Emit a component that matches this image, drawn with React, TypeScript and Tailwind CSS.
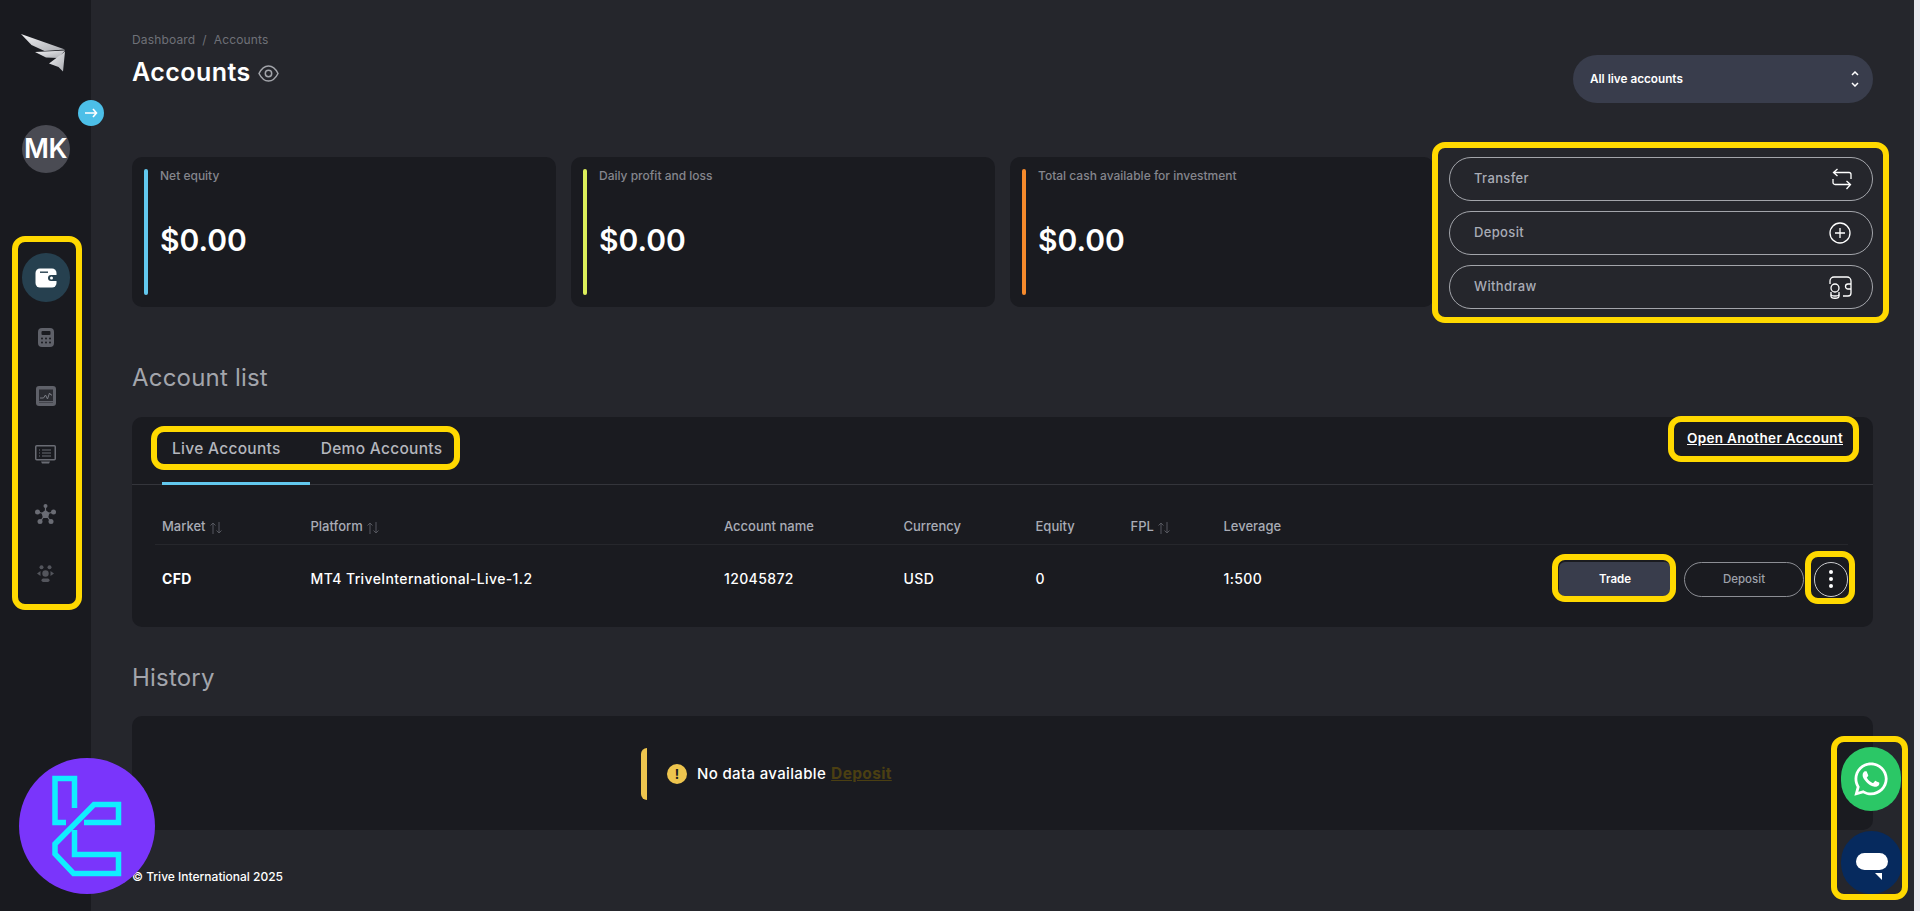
import React from "react";
import { FaWhatsapp } from "react-icons/fa";

const Highlight = ({ cls }: { cls: string }) => (
  <div className={`absolute border-[6px] border-[#ffd900] rounded-[13px] pointer-events-none ${cls}`} />
);

const Card = ({ label, bar }: { label: string; bar: string }) => (
  <div className="h-[150px] rounded-[10px] bg-[#1a1b20] flex pt-[12px] pl-[12px]">
    <div className={`w-[4px] h-[126px] rounded-full ${bar}`} />
    <div className="pl-[12px]">
      <div className="text-[12px] leading-[14px] text-[#85868d] font-medium">{label}</div>
      <div className="mt-[39px] text-[30px] leading-[36px] font-semibold text-white">$0.00</div>
    </div>
  </div>
);

const ActionBtn = ({ label, icon }: { label: string; icon: React.ReactNode }) => (
  <div className="h-[44px] rounded-full border border-[#a3a5ab] flex items-center justify-between pl-[24px] pr-[20px]">
    <span className="text-[13px] font-medium tracking-[0.35px] text-[#a9acb6] -mt-[1px]">{label}</span>
    {icon}
  </div>
);

const Sort = () => (
  <svg width="14" height="14" viewBox="0 0 14 14" fill="none" stroke="#55575e" strokeWidth="1" className="ml-[3px] mt-[2px]">
    <path d="M4 13V2M1.500 4.500L4 2l2.500 2.500M10 1v11M7.500 9.500L10 12l2.500-2.500" />
  </svg>
);

const Th = ({ children, sort }: { children: React.ReactNode; sort?: boolean }) => (
  <div className="flex items-center text-[13px] font-medium text-[#a9acb6]">
    {children}
    {sort && <Sort />}
  </div>
);

const Td = ({ children, bold }: { children: React.ReactNode; bold?: boolean }) => (
  <div className={`text-[14px] -mt-[2px] text-white ${bold ? "font-bold" : "font-medium"} tracking-[0.38px]`}>{children}</div>
);

const NavIcons = () => (
  <div className="flex flex-col items-center">
    <div className="w-[48px] h-[49px] rounded-full bg-[#26404f] flex items-center justify-center">
      <svg width="22" height="20" viewBox="0 0 22 20">
        <rect x="0.500" y="0.500" width="21" height="19" rx="4.500" fill="#fff" />
        <rect x="5" y="3.500" width="8" height="1.400" fill="#26404f" />
        <path d="M22 7h-6a3 3 0 0 0 0 6h6z" fill="#26404f" />
        <circle cx="16.500" cy="10" r="1.500" fill="#fff" />
      </svg>
    </div>
    <svg className="mt-[26px]" width="16" height="19" viewBox="0 0 16 19">
      <rect width="16" height="19" rx="4" fill="#5f6169" />
      <rect x="3.500" y="3" width="9" height="4" rx="1" fill="#1a1b20" />
      <g fill="#1a1b20">
        <circle cx="4" cy="10.500" r="1" /><circle cx="8" cy="10.500" r="1" /><circle cx="12" cy="10.500" r="1" />
        <circle cx="4" cy="14.500" r="1" /><circle cx="8" cy="14.500" r="1" /><circle cx="12" cy="14.500" r="1" />
      </g>
    </svg>
    <svg className="mt-[39px]" width="20" height="20" viewBox="0 0 20 20">
      <rect width="20" height="20" rx="3" fill="#5f6169" />
      <rect x="3" y="3.500" width="14" height="13" fill="#2a2b31" />
      <path d="M4 12h3.500l2-3 2 4 2-6 1.500 2h1" fill="none" stroke="#7b7d85" strokeWidth="1" />
      <path d="M3 15.500h14" stroke="#5f6169" strokeWidth="1" />
    </svg>
    <svg className="mt-[39px]" width="21" height="19" viewBox="0 0 21 19" fill="none" stroke="#6a6c74">
      <rect x="0.750" y="0.750" width="19.500" height="14" rx="1" strokeWidth="1.500" />
      <path d="M7 5h9M7 8h9M7 11h9M4 5h1M4 8h1M4 11h1" strokeWidth="1.200" />
      <path d="M6 16.500h9l-1 2H7z" fill="#6a6c74" stroke="none" />
    </svg>
    <svg className="mt-[40px]" width="21" height="20" viewBox="0 0 21 20" fill="#6a6c74" stroke="#6a6c74">
      <path d="M10.500 2v8M2.500 8l8 2 8-2M5 18l5.500-8 5.500 8" strokeWidth="1.200" fill="none" />
      <circle cx="10.500" cy="2" r="2" stroke="none" />
      <circle cx="2.500" cy="8" r="2.500" stroke="none" />
      <circle cx="18.500" cy="8" r="2.500" stroke="none" />
      <circle cx="5" cy="17.500" r="2.500" stroke="none" />
      <circle cx="16" cy="17.500" r="2.500" stroke="none" />
      <path d="M10.500 6l4 3-1.500 5h-5L6.500 9z" stroke="none" />
    </svg>
    <svg className="mt-[41px]" width="17" height="17" viewBox="0 0 17 17" fill="#53555c">
      <circle cx="4.500" cy="2.200" r="2" />
      <circle cx="12.500" cy="2.200" r="2" />
      <circle cx="8.500" cy="8.500" r="3.200" />
      <path d="M0 8.500L3.500 6v5zM17 8.500L13.500 6v5z" />
      <rect x="4.500" y="13.500" width="8" height="3.500" rx="1.700" />
    </svg>
  </div>
);

export default function App() {
  return (
    <div className="relative flex h-[911px] w-full overflow-hidden bg-[#25262c] font-['Inter',sans-serif]">
      <aside className="w-[91px] shrink-0 bg-[#191a1f] flex flex-col items-center">
        <svg className="mt-[33px] ml-[-3px]" width="46" height="40" viewBox="20 33 46 40">
          <defs>
            <linearGradient id="wing" x1="0" y1="0" x2="1" y2="1">
              <stop offset="0" stopColor="#f2f2f4" />
              <stop offset="1" stopColor="#a9abb0" />
            </linearGradient>
          </defs>
          <g fill="url(#wing)">
            <path d="M20 34l44 15.500-20.500 1.500-13-6z" />
            <path d="M34 52l30-1.500-7 7.500-12-.5z" />
            <path d="M48 63.500l16-12-2 20-4.500-4.500z" />
          </g>
        </svg>
        <div className="mt-[52px] w-[48px] h-[48px] rounded-full bg-[#4a4b53] flex items-center justify-center text-[27px] tracking-[-0.5px] font-semibold text-white">
          MK
        </div>
        <div className="mt-[80px]">
          <NavIcons />
        </div>
      </aside>

      <main className="flex-1 min-w-0 px-[41px] pt-[33px]">
        <div className="h-[124px] flex justify-between items-start">
          <div>
            <div className="text-[12px] leading-[14px] text-[#6f7178] tracking-[0.15px]">Dashboard&nbsp; / &nbsp;Accounts</div>
            <div className="mt-[10px] flex items-center">
              <span className="text-[25px] leading-[30px] font-semibold text-white tracking-[0.45px]">Accounts</span>
              <svg className="ml-[7px] mt-[3px]" width="21" height="17" viewBox="0 0 21 17" fill="none" stroke="#a3a5ab" strokeWidth="1.500">
                <path d="M1 8.500C3.500 3.500 7 1 10.500 1S17.500 3.500 20 8.500C17.500 13.500 14 16 10.500 16S3.500 13.500 1 8.500z" />
                <circle cx="10.500" cy="8.500" r="3.200" />
              </svg>
            </div>
          </div>
          <div className="mt-[22px] w-[300px] h-[48px] rounded-full bg-[#393d4c] flex items-center justify-between pl-[17px] pr-[14px]">
            <span className="text-[11.750px] font-semibold text-white mt-[1px]">All live accounts</span>
            <svg width="8" height="16" viewBox="0 0 8 16" fill="none" stroke="#fff" strokeWidth="1.500">
              <path d="M1 4l3-3 3 3M1 12l3 3 3-3" />
            </svg>
          </div>
        </div>

        <div className="grid grid-cols-4 gap-[15px]">
          <Card label="Net equity" bar="bg-[#62c8ee]" />
          <Card label="Daily profit and loss" bar="bg-[#dcef5a]" />
          <Card label="Total cash available for investment" bar="bg-[#f58a2c]" />
          <div className="flex flex-col gap-[10px]">
            <ActionBtn
              label="Transfer"
              icon={
                <svg width="20" height="22" viewBox="0 0 20 22" fill="none" stroke="#fff" strokeWidth="1.300">
                  <path d="M5.500 1L1.500 4.500 5.500 8M1.500 4.500H17a2 2 0 0 1 2 2V11M14.500 21l4-4.500-4-3.500M18.500 16.500H3a2 2 0 0 1-2-2V11" />
                </svg>
              }
            />
            <ActionBtn
              label="Deposit"
              icon={
                <svg className="mr-[1px]" width="22" height="22" viewBox="0 0 22 22" fill="none" stroke="#fff" strokeWidth="1.300">
                  <circle cx="11" cy="11" r="10" />
                  <path d="M11 6v10M6 11h10" />
                </svg>
              }
            />
            <ActionBtn
              label="Withdraw"
              icon={
                <svg width="24" height="23" viewBox="0 0 24 23" fill="none" stroke="#fff" strokeWidth="1.300">
                  <path d="M2 8V5a4 4 0 0 1 4-4h13a4 4 0 0 1 4 4v3" />
                  <path d="M23 8v9a3 3 0 0 1-3 3h-5" />
                  <path d="M23 8h-3a2.500 2.500 0 0 0 0 5h3" />
                  <circle cx="7" cy="12" r="4" />
                  <path d="M3 16v4c0 3 8 3 8 0v-4" />
                  <path d="M3 18.500c0 2 8 2 8 0" />
                </svg>
              }
            />
          </div>
        </div>

        <h2 className="mt-[54px] h-[30px] text-[24px] leading-[30px] font-normal text-[#a3a5ac] tracking-[0.2px]">Account list</h2>

        <section className="mt-[24px] h-[210px] rounded-[10px] bg-[#1a1b20]">
          <div className="h-[68px] border-b border-[#34353b] flex justify-between pl-[30px] pr-[30px]">
            <div className="relative flex h-[68px] pl-[10px] pt-[22px] text-[15.500px] font-medium tracking-[0.3px] text-[#b4b6bd] gap-[40px]">
              <span className="leading-[20px]">Live Accounts</span>
              <span className="leading-[20px]">Demo Accounts</span>
              <div className="absolute left-0 bottom-0 w-[148px] h-[3px] bg-[#62c8ee]" />
            </div>
            <a className="mt-[12px] h-[18px] text-[13.500px] leading-[18px] font-semibold text-white underline tracking-[0.33px]">
              Open Another Account
            </a>
          </div>
          <div className="ml-[23px] mr-[25px]">
            <div className="h-[60px] border-b border-[#26272c] pl-[7px] pt-[24px] grid grid-cols-[148.500px_413.500px_179.500px_132px_95px_93px_1fr] items-center">
              <Th sort>Market</Th>
              <Th sort>Platform</Th>
              <Th>Account name</Th>
              <Th>Currency</Th>
              <Th>Equity</Th>
              <Th sort>FPL</Th>
              <Th>Leverage</Th>
            </div>
            <div className="h-[68px] pl-[7px] grid grid-cols-[148.500px_413.500px_179.500px_132px_95px_93px_1fr] items-center">
              <Td bold>CFD</Td>
              <Td>MT4 TriveInternational-Live-1.2</Td>
              <Td>12045872</Td>
              <Td>USD</Td>
              <Td>0</Td>
              <Td>{""}</Td>
              <div className="flex items-center">
                <Td>1:500</Td>
                <div className="ml-auto flex items-center">
                  <div className="w-[112px] h-[35px] rounded-[6px] bg-[#393d4c] flex items-center justify-center text-[11.500px] font-semibold text-white pt-[1px]">Trade</div>
                  <div className="ml-[13px] w-[120px] h-[35px] rounded-full border border-[#8c8e94] flex items-center justify-center text-[11.500px] font-medium text-[#9ea1aa] pt-[1px]">Deposit</div>
                  <div className="ml-[10px] w-[34px] h-[35px] rounded-full border border-[#c9cacd] flex flex-col items-center justify-center gap-[3px]">
                    <span className="w-[4px] h-[4px] rounded-full bg-white" />
                    <span className="w-[4px] h-[4px] rounded-full bg-white" />
                    <span className="w-[4px] h-[4px] rounded-full bg-white" />
                  </div>
                </div>
              </div>
            </div>
          </div>
        </section>

        <h2 className="mt-[36px] h-[30px] text-[24px] leading-[30px] font-normal text-[#a3a5ac] tracking-[0.2px]">History</h2>

        <section className="mt-[23px] h-[114px] rounded-[10px] bg-[#1a1b20] pl-[509px] pt-[32px]">
          <div className="flex items-center h-[52px]">
            <div className="w-[6px] h-[52px] rounded-l-[6px] bg-[#eec54e]" />
            <div className="ml-[20px] w-[20px] h-[20px] rounded-full bg-[#eec54e] flex items-center justify-center text-[13px] leading-none font-bold text-[#1a1b20]">!</div>
            <span className="ml-[10px] text-[15px] font-medium text-white tracking-[0.35px]">No data available</span>
            <a className="ml-[5px] text-[15.500px] font-bold text-[#4b3f12] underline tracking-[0.35px]">Deposit</a>
          </div>
        </section>

        <footer className="mt-[40px] text-[12px] leading-[14px] font-medium text-white">© Trive International 2025</footer>
      </main>

      <div className="w-[6px] shrink-0 bg-[#e9e9ee]" />

      <div className="absolute left-[78px] top-[100px] w-[26px] h-[26px] rounded-full bg-[#4cbfe8] flex items-center justify-center">
        <svg width="14" height="10" viewBox="0 0 14 10" fill="none" stroke="#fff" strokeWidth="1.600">
          <path d="M1 5h11.500M9 1l3.500 4L9 9" />
        </svg>
      </div>

      <svg className="absolute left-[19px] top-[758px]" width="136" height="136" viewBox="19 758 136 136" fill="none">
        <circle cx="87" cy="826" r="68" fill="#7a35fb" />
        <g stroke="#10eeff" strokeWidth="5.500" strokeLinejoin="miter">
          <path d="M74.500 808V778.500H55V822.500H66" />
          <path d="M84 822.500H118.500V804.500H94L55 844V854L73.500 873.500H118.500V854.500H74.500V830" />
        </g>
      </svg>

      <div className="absolute left-[1841px] top-[747px] w-[60px] h-[64px] rounded-full bg-[#2bc766] flex items-center justify-center">
        <FaWhatsapp className="text-white w-[38px] h-[38px]" />
      </div>
      <div className="absolute left-[1841px] top-[831px] w-[61px] h-[63px] rounded-full bg-[#062a5e]">
        <div className="absolute left-[15px] top-[22px] w-[32px] h-[17px] rounded-full bg-white" />
        <svg className="absolute left-[34px] top-[42px]" width="7" height="7" viewBox="0 0 7 7">
          <path d="M0 0h7v7z" fill="#fff" />
        </svg>
      </div>

      <Highlight cls="left-[12px] top-[236px] w-[70px] h-[374px]" />
      <Highlight cls="left-[1432px] top-[142px] w-[457px] h-[181px]" />
      <Highlight cls="left-[151px] top-[426px] w-[309px] h-[44px]" />
      <Highlight cls="left-[1668px] top-[416px] w-[191px] h-[46px]" />
      <Highlight cls="left-[1552px] top-[554px] w-[124px] h-[48px]" />
      <Highlight cls="left-[1805px] top-[551px] w-[50px] h-[53px]" />
      <Highlight cls="left-[1831px] top-[736px] w-[77px] h-[164px]" />
    </div>
  );
}
